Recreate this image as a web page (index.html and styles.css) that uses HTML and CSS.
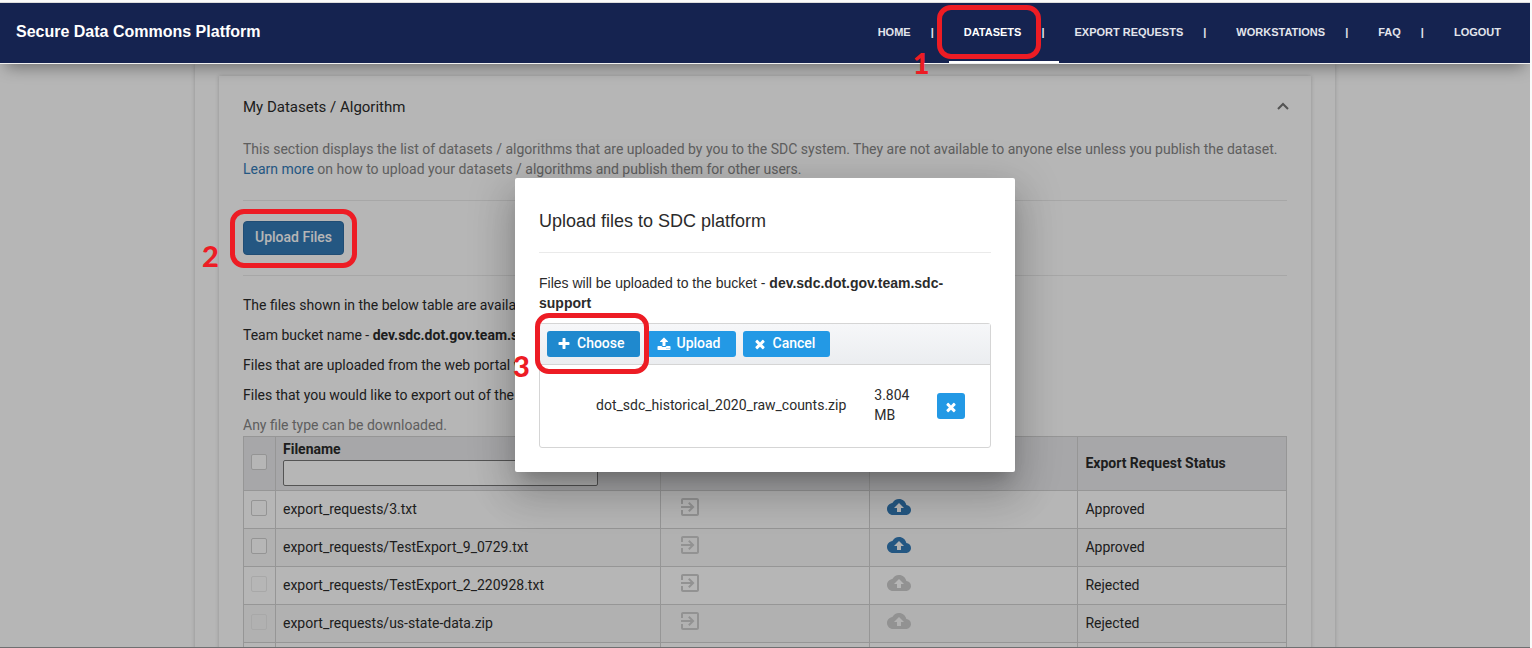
FILE: index.html
```html
<!DOCTYPE html>
<html lang="en">
<head>
<meta charset="utf-8">
<title>Secure Data Commons Platform</title>
<link rel="stylesheet" href="styles.css">
</head>
<body>
<svg class="sprite" aria-hidden="true">
  <symbol id="exit" viewBox="0 0 24 24"><path d="M10.09 15.59L11.5 17l5-5-5-5-1.41 1.41L12.67 11H3v2h9.67l-2.58 2.59zM19 3H5c-1.11 0-2 .9-2 2v4h2V5h14v14H5v-4H3v4c0 1.1.89 2 2 2h14c1.1 0 2-.9 2-2V5c0-1.1-.9-2-2-2z"/></symbol>
  <symbol id="cloud" viewBox="0 0 24 24"><path d="M19.35 10.04C18.67 6.59 15.64 4 12 4 9.11 4 6.6 5.64 5.35 8.04 2.34 8.36 0 10.91 0 14c0 3.31 2.69 6 6 6h13c2.76 0 5-2.24 5-5 0-2.64-2.05-4.78-4.65-4.96zM14 13v4h-4v-4H7l5-5 5 5h-3z"/></symbol>
  <symbol id="plus" viewBox="0 0 1792 1792"><path d="M1600 736v192q0 40-28 68t-68 28h-416v416q0 40-28 68t-68 28h-192q-40 0-68-28t-28-68v-416h-416q-40 0-68-28t-28-68v-192q0-40 28-68t68-28h416v-416q0-40 28-68t68-28h192q40 0 68 28t28 68v416h416q40 0 68 28t28 68z"/></symbol>
  <symbol id="times" viewBox="0 0 1792 1792"><path d="M1490 1322q0 40-28 68l-136 136q-28 28-68 28t-68-28l-294-294-294 294q-28 28-68 28t-68-28l-136-136q-28-28-28-68t28-68l294-294-294-294q-28-28-28-68t28-68l136-136q28-28 68-28t68 28l294 294 294-294q28-28 68-28t68 28l136 136q28 28 28 68t-28 68l-294 294 294 294q28 28 28 68z"/></symbol>
  <symbol id="upload" viewBox="0 0 1792 1792"><path d="M1344 1472q0-26-19-45t-45-19-45 19-19 45 19 45 45 19 45-19 19-45zm256 0q0-26-19-45t-45-19-45 19-19 45 19 45 45 19 45-19 19-45zm128-224v320q0 40-28 68t-68 28h-1472q-40 0-68-28t-28-68v-320q0-40 28-68t68-28h427q21 56 70.500 92t110.500 36h256q61 0 110.500-36t70.500-92h427q40 0 68 28t28 68zm-325-648q-17 40-59 40h-256v448q0 26-19 45t-45 19h-256q-26 0-45-19t-19-45v-448h-256q-42 0-59-40-17-39 14-69l448-448q18-19 45-19t45 19l448 448q31 30 14 69z"/></symbol>
</svg>
<div class="frame">
  <header class="topbar">
    <div class="brand">Secure Data Commons Platform</div>
    <nav class="nav">
      <div class="nav-item"><a href="#">HOME</a><span class="sep">|</span></div>
      <div class="nav-item active"><a href="#">DATASETS</a><span class="sep">|</span><span class="mark mark-one"></span><span class="step step-one">1</span></div>
      <div class="nav-item"><a href="#">EXPORT REQUESTS</a><span class="sep">|</span></div>
      <div class="nav-item"><a href="#">WORKSTATIONS</a><span class="sep">|</span></div>
      <div class="nav-item"><a href="#">FAQ</a><span class="sep">|</span></div>
      <div class="nav-item"><a href="#">LOGOUT</a></div>
    </nav>
  </header>

  <main class="container">
    <section class="card">
      <div class="card-head">
        <h1>My Datasets / Algorithm</h1>
        <button class="toggle" aria-label="Collapse"><svg viewBox="0 0 12 8"><path d="M1 7l5-5 5 5" fill="none" stroke="currentColor" stroke-width="2"/></svg></button>
      </div>
      <p class="intro muted">This section displays the list of datasets / algorithms that are uploaded by you to the SDC system. They are not available to anyone else unless you publish the dataset. <a href="#">Learn more</a> on how to upload your datasets / algorithms and publish them for other users.</p>
      <hr>
      <div class="marked">
        <button class="upload-files">Upload Files</button>
        <span class="mark mark-two"></span><span class="step step-two">2</span>
      </div>
      <hr>
      <div class="notes">
        <p>The files shown in the below table are available</p>
        <p>Team bucket name - <b>dev.sdc.dot.gov.team.sdc-support</b></p>
        <p>Files that are uploaded from the web portal will</p>
        <p>Files that you would like to export out of the</p>
        <p class="muted">Any file type can be downloaded.</p>
      </div>
      <table class="files">
        <colgroup><col class="col-check"><col><col class="col-fifth"><col class="col-fifth"><col class="col-fifth"></colgroup>
        <thead>
          <tr><th><input type="checkbox" aria-label="Select all"></th><th><label for="filter">Filename</label><input id="filter" class="filter" type="text"></th><th></th><th></th><th>Export Request Status</th></tr>
        </thead>
        <tbody>
          <tr><td><input type="checkbox" aria-label="Select row"></td><td>export_requests/3.txt</td><td><svg class="icon"><use href="#exit"/></svg></td><td><svg class="icon blue"><use href="#cloud"/></svg></td><td>Approved</td></tr>
          <tr><td><input type="checkbox" aria-label="Select row"></td><td>export_requests/TestExport_9_0729.txt</td><td><svg class="icon"><use href="#exit"/></svg></td><td><svg class="icon blue"><use href="#cloud"/></svg></td><td>Approved</td></tr>
          <tr><td><input type="checkbox" aria-label="Select row" disabled></td><td>export_requests/TestExport_2_220928.txt</td><td><svg class="icon"><use href="#exit"/></svg></td><td><svg class="icon"><use href="#cloud"/></svg></td><td>Rejected</td></tr>
          <tr><td><input type="checkbox" aria-label="Select row" disabled></td><td>export_requests/us-state-data.zip</td><td><svg class="icon"><use href="#exit"/></svg></td><td><svg class="icon"><use href="#cloud"/></svg></td><td>Rejected</td></tr>
          <tr><td></td><td></td><td></td><td></td><td></td></tr>
        </tbody>
      </table>
    </section>
  </main>

  <div class="backdrop">
    <div class="dialog" role="dialog" aria-labelledby="dialog-title">
      <h2 id="dialog-title">Upload files to SDC platform</h2>
      <hr>
      <p>Files will be uploaded to the bucket - <b>dev.sdc.dot.gov.team.sdc-support</b></p>
      <div class="uploader">
        <div class="uploader-bar">
          <div class="marked">
            <button class="btn choose"><svg><use href="#plus"/></svg>Choose</button>
            <span class="mark mark-three"></span><span class="step step-three">3</span>
          </div>
          <button class="btn"><svg><use href="#upload"/></svg>Upload</button>
          <button class="btn"><svg><use href="#times"/></svg>Cancel</button>
        </div>
        <div class="uploader-file">
          <span class="file-name">dot_sdc_historical_2020_raw_counts.zip</span>
          <span class="file-size">3.804 MB</span>
          <button class="btn remove" aria-label="Remove"><svg><use href="#times"/></svg></button>
        </div>
      </div>
    </div>
  </div>
</div>
</body>
</html>
```
FILE: styles.css
```css
* { box-sizing: border-box; }

body {
  margin: 0;
  height: 100vh;
  display: flex;
  padding: 2px 2px 0 0;
  background: #fafafa;
  font: 14px/20px Roboto, sans-serif;
  color: #2b2b2b;
}

h1, h2, p { margin: 0; font-weight: 400; }
a { color: #337ab7; text-decoration: none; }
button, input { font: inherit; }
b { font-weight: 700; }

hr {
  width: 100%;
  margin: 20px 0;
  border: 0;
  border-top: 1px solid #eaeaea;
}

.sprite { position: absolute; width: 0; height: 0; }

.frame {
  position: relative;
  flex: 1;
  overflow: hidden;
  border-top: 1px solid #dcdcdc;
  border-bottom: 1px solid #6f6f71;
  background: #fff;
}

/* Top bar */
.topbar {
  position: relative;
  z-index: 20;
  display: flex;
  justify-content: space-between;
  align-items: center;
  height: 61px;
  padding: 0 14px 0 16px;
  border-bottom: 1px solid #f0f0f0;
  background: #152350;
  box-shadow: 0 9px 16px -6px rgba(0, 0, 0, .4);
  font-family: "Liberation Sans", Arial, sans-serif;
  font-weight: 700;
}
.brand { padding-bottom: 2px; font-size: 16px; color: #fff; }
.nav { display: flex; align-self: stretch; font-size: 11px; }
.nav-item {
  position: relative;
  display: flex;
  align-items: center;
  gap: 20px;
  padding: 0 15px;
  border-bottom: 2px solid transparent;
  color: #e3e5ec;
}
.nav-item a { color: inherit; }
.nav-item.active { border-bottom-color: #fff; }
.nav-item.active a { color: #fff; }

/* Page card */
.container {
  max-width: 1140px;
  margin: 0 auto;
  padding: 12px 24px;
  box-shadow: 0 0 4px rgba(0, 0, 0, .2);
}
.card {
  padding: 0 24px;
  background: #fff;
  box-shadow: 0 0 4px rgba(0, 0, 0, .2);
}
.card-head {
  display: flex;
  justify-content: space-between;
  align-items: center;
  height: 63px;
  padding-bottom: 1px;
}
.card-head h1 { font-size: 15px; }
.toggle {
  padding: 0;
  border: 0;
  margin-right: -2px;
  background: none;
  color: #757575;
}
.toggle svg { display: block; width: 12px; height: 8px; margin-bottom: 3px; }
.intro { padding-bottom: 1px; }
.muted { color: #858585; }
.marked { position: relative; width: max-content; }
.upload-files {
  display: block;
  height: 34px;
  padding: 0 11px 2px;
  border: 1px solid #2e6da4;
  border-radius: 4px;
  background: #337ab7;
  color: #fff;
  font-weight: 500;
}
.notes {
  display: flex;
  flex-direction: column;
  gap: 10px;
  margin-top: -1px;
  padding-bottom: 1px;
}

/* File table */
.files {
  width: 100%;
  table-layout: fixed;
  border-collapse: collapse;
}
.col-check { width: 32px; }
.col-fifth { width: 20%; }
.files th, .files td {
  height: 38px;
  padding: 0 7px 2px;
  border: 1px solid #d2d2d2;
  text-align: left;
  vertical-align: middle;
}
.files th { height: 54px; background: #eaebed; font-weight: 700; }
.files tbody tr:nth-child(even) { background: #f9f9f9; }
.files label { display: block; }
.filter {
  display: block;
  width: 85%;
  height: 26px;
  margin-top: 1px;
  padding: 0 4px;
  border: 1px solid #767676;
  border-radius: 2px;
  background: #fff;
  font-weight: 400;
}
.files input[type="checkbox"] {
  appearance: none;
  display: block;
  width: 16px;
  height: 16px;
  margin: 0 0 2px;
  border: 1px solid #d0d0d0;
  border-radius: 2px;
  background: #fff;
}
.files input[type="checkbox"]:disabled { border-color: #ececec; background: none; }
.icon {
  display: block;
  width: 24px;
  height: 24px;
  margin: 0 10px 4px;
  fill: #cdcdcd;
}
.icon.blue { fill: #337ab7; }

/* Dialog */
.backdrop {
  position: absolute;
  inset: 0;
  display: flex;
  justify-content: center;
  align-items: center;
  background: rgba(0, 0, 0, .288);
}
.dialog {
  width: 500px;
  padding: 24px;
  border-radius: 2px;
  background: #fff;
  box-shadow: 0 11px 15px -7px rgba(0, 0, 0, .2), 0 24px 38px 3px rgba(0, 0, 0, .14), 0 9px 46px 8px rgba(0, 0, 0, .12);
  font-family: "Liberation Sans", Arial, sans-serif;
}
.dialog h2 { margin: 8px 0 20px; font-size: 18px; line-height: 22px; }
.dialog p { margin-bottom: 10px; }
.uploader {
  border: 1px solid #d5d5d5;
  border-radius: 3px;
  font-family: Roboto, sans-serif;
}
.uploader-bar {
  display: flex;
  gap: 7px;
  padding: 7px;
  border-bottom: 1px solid #d5d5d5;
  background: linear-gradient(#f6f7f9, #ebedf0);
}
.btn {
  display: flex;
  align-items: center;
  gap: 6px;
  height: 26px;
  padding: 0 15px 2px 10px;
  border: 0;
  border-radius: 3px;
  background: #2399e5;
  color: #fff;
  font-weight: 500;
}
.btn svg { width: 14px; height: 14px; margin-top: 2px; fill: currentColor; }
.btn.choose { background: #1f89ce; }
.uploader-file {
  display: flex;
  align-items: center;
  gap: 28px;
  padding: 20px 25px 22px 56px;
}
.file-size { flex: 1; width: 36px; }
.btn.remove { padding: 0 7px; margin-top: 2px; }

/* Walkthrough marks */
.mark {
  position: absolute;
  z-index: 30;
  border: 5px solid #ed1c24;
  border-radius: 14px;
  pointer-events: none;
}
.step {
  position: absolute;
  z-index: 30;
  color: #ed1c24;
  font: 900 29px/30px Lato, sans-serif;
}
.mark-one { inset: 2px 18px 2px -12px; }
.step-one { left: -36px; top: 45px; }
.mark-two { inset: -12px -13px -13px; }
.step-two { left: -41px; top: 20px; }
.mark-three { inset: -18px -9px -17px -12px; }
.step-three { left: -34px; top: 20px; }
```
